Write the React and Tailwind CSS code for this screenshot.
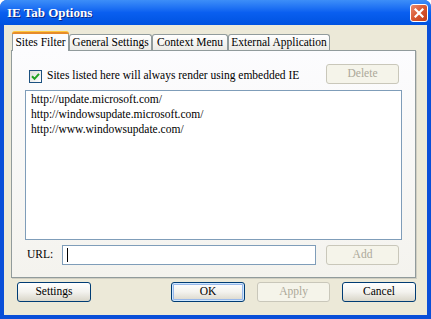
import React from "react";

const FONT = { fontFamily: '"Liberation Serif", "Times New Roman", serif' };

function XPButton({ children, disabled, isDefault, className = "" }) {
  if (disabled) {
    return (
      <div
        className={`h-[20px] flex items-center justify-center rounded-[3px] border border-[#c9c7ba] bg-[#f5f4ea] text-[#aca899] text-[11.5px] ${className}`}
      >
        {children}
      </div>
    );
  }
  return (
    <div
      className={`h-[20px] flex items-center justify-center rounded-[3px] border border-[#003c74] bg-linear-to-b from-[#ffffff] via-[#f3f2ee] to-[#d9d6c9] text-black text-[11.5px] ${
        isDefault ? "shadow-[inset_0_0_0_1px_#cee7ff,inset_0_0_0_2px_#98b8ea]" : ""
      } ${className}`}
    >
      {children}
    </div>
  );
}

function Tab({ label, active, width }) {
  if (active) {
    return (
      <div
        className="relative z-10 h-[19px] -mb-px flex items-center justify-center border-x border-[#919b9c] bg-[#fcfcfe] rounded-t-[3px] text-[11.5px]"
        style={{ width }}
      >
        <div className="absolute -top-px -left-px -right-px h-[3px] rounded-t-[3px] bg-[#e68b2c] border-t border-[#ffc83c]" />
        <span className="mt-[2px]">{label}</span>
      </div>
    );
  }
  return (
    <div
      className="h-[16px] flex items-center justify-center border border-b-0 border-[#919b9c] rounded-t-[3px] bg-linear-to-b from-[#ffffff] to-[#ecebe6] text-[11.5px]"
      style={{ width }}
    >
      {label}
    </div>
  );
}

export default function App() {
  return (
    <div className="w-[431px] h-[319px] flex flex-col bg-[#0a4fd8] rounded-t-[7px] overflow-hidden" style={FONT}>
      {/* Title bar */}
      <div className="h-[25px] shrink-0 flex items-center justify-between pl-[7px] pr-[3px] bg-linear-to-b from-[#3d8ef8] via-[#0a5ff0] to-[#0052e0]">
        <span className="text-white font-bold text-[13px] [text-shadow:1px_1px_0_#0a2a8a]">IE Tab Options</span>
        <div className="w-[18px] h-[18px] rounded-[3px] border border-white bg-linear-to-br from-[#e9896c] via-[#d8562f] to-[#c23d18] flex items-center justify-center">
          <svg width="10" height="10" viewBox="0 0 10 10">
            <path d="M1.5 1.5 L8.5 8.5 M8.5 1.5 L1.5 8.5" stroke="white" strokeWidth="2.2" strokeLinecap="square" />
          </svg>
        </div>
      </div>

      {/* Body */}
      <div className="flex-1 mx-[4px] mb-[4px] bg-[#ece9d8] flex flex-col pt-[7px] pl-[7px] pr-[11px]">
        {/* Tabs */}
        <div className="flex items-end pl-[1px] h-[18px]">
          <Tab label="Sites Filter" active width={57} />
          <Tab label="General Settings" width={83} />
          <Tab label="Context Menu" width={76} />
          <Tab label="External Application" width={102} />
        </div>

        {/* Panel */}
        <div className="h-[228px] border border-[#919b9c] bg-linear-to-b from-[#fcfcfe] to-[#f4f3ee] flex flex-col px-[13px] pt-[13px] shadow-[1px_1px_0_#d0cec2]">
          <div className="flex items-center justify-between h-[20px] pl-[4px] pr-[3px]">
            <div className="flex items-center gap-[5px] mt-[4px]">
              <div className="w-[13px] h-[13px] border border-[#1c5180] bg-linear-to-br from-[#dcdcd7] to-[#ffffff] flex items-center justify-center">
                <svg width="9" height="9" viewBox="0 0 9 9">
                  <path d="M1 4.2 L3.5 6.8 L8 1.8" stroke="#21a121" strokeWidth="2" fill="none" />
                </svg>
              </div>
              <span className="text-[11.5px] text-black">Sites listed here will always render using embedded IE</span>
            </div>
            <XPButton disabled className="w-[73px]">Delete</XPButton>
          </div>

          <div className="mt-[6px] h-[150px] border border-[#7f9db9] bg-white px-[5px] pt-[1px] text-[11.5px] leading-[15px] text-black">
            <div>http://update.microsoft.com/</div>
            <div>http://windowsupdate.microsoft.com/</div>
            <div>http://www.windowsupdate.com/</div>
          </div>

          <div className="mt-[4px] flex items-center h-[21px] pl-[2px] pr-[3px]">
            <span className="text-[11.5px] w-[35px]">URL:</span>
            <div className="w-[254px] h-[20px] mt-[1px] border border-[#7f9db9] bg-white flex items-center pl-[4px]">
              <div className="w-px h-[14px] bg-black" />
            </div>
            <div className="flex-1" />
            <XPButton disabled className="w-[73px]">Add</XPButton>
          </div>
        </div>

        {/* Bottom buttons */}
        <div className="mt-[4px] flex items-center pl-[6px]">
          <XPButton className="w-[74px]">Settings</XPButton>
          <div className="flex-1" />
          <XPButton isDefault className="w-[74px]">OK</XPButton>
          <XPButton disabled className="w-[73px] ml-[12px]">Apply</XPButton>
          <XPButton className="w-[74px] ml-[12px]">Cancel</XPButton>
        </div>
      </div>
    </div>
  );
}
